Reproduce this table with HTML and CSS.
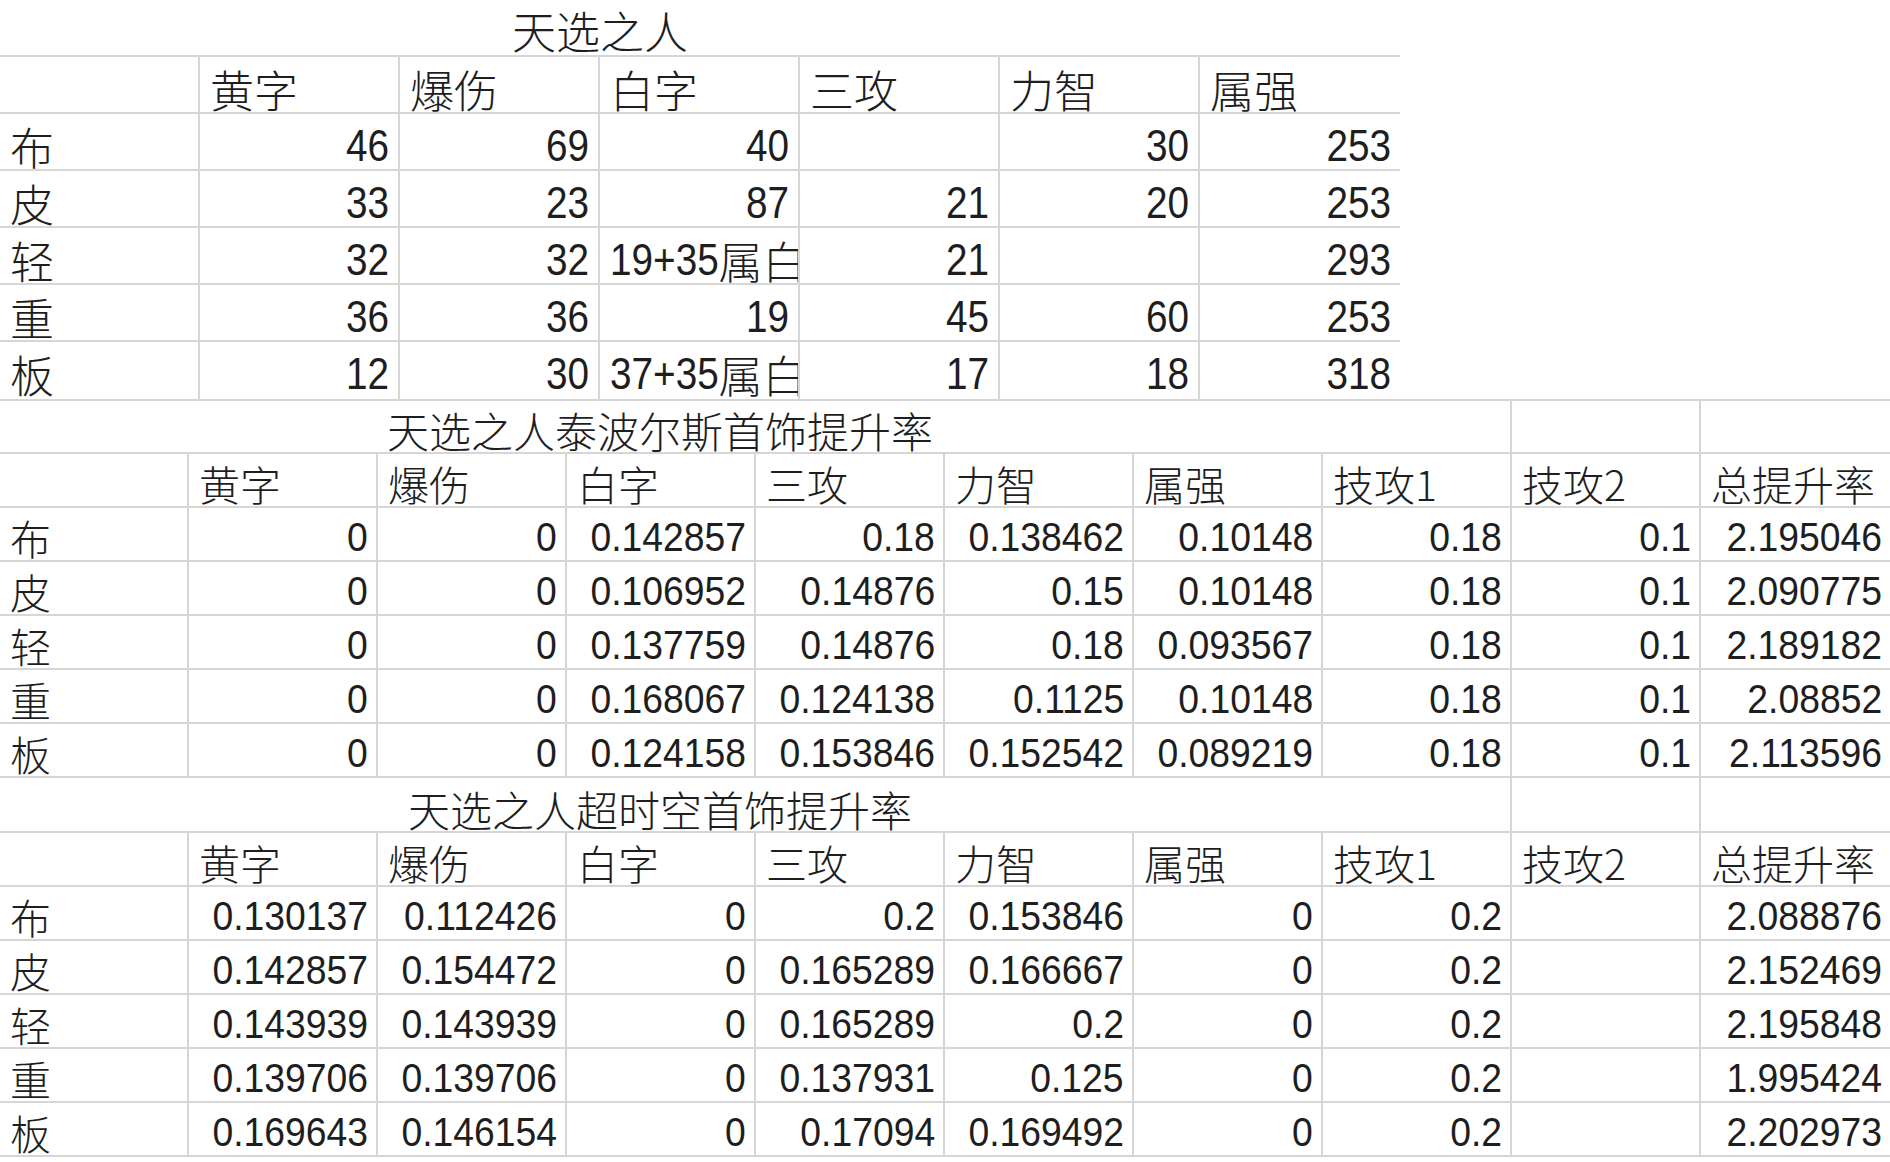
FILE: index.html
```html
<!DOCTYPE html>
<html lang="zh-CN">
<head>
<meta charset="utf-8">
<title>天选之人</title>
<link rel="stylesheet" href="styles.css">
</head>
<body>
<section class="sheet t1">
  <div class="title"><div class="title-text">天选之人</div></div>
  <div class="row head">
    <div class="cell"></div><div class="cell zh">黄字</div><div class="cell zh">爆伤</div><div class="cell zh">白字</div><div class="cell zh">三攻</div><div class="cell zh">力智</div><div class="cell zh end">属强</div>
  </div>
  <div class="row">
    <div class="cell zh">布</div><div class="cell num"><span>46</span></div><div class="cell num"><span>69</span></div><div class="cell num"><span>40</span></div><div class="cell num"></div><div class="cell num"><span>30</span></div><div class="cell num end"><span>253</span></div>
  </div>
  <div class="row">
    <div class="cell zh">皮</div><div class="cell num"><span>33</span></div><div class="cell num"><span>23</span></div><div class="cell num"><span>87</span></div><div class="cell num"><span>21</span></div><div class="cell num"><span>20</span></div><div class="cell num end"><span>253</span></div>
  </div>
  <div class="row">
    <div class="cell zh">轻</div><div class="cell num"><span>32</span></div><div class="cell num"><span>32</span></div><div class="cell txt"><span class="d">19+35</span><span class="zh">属白</span></div><div class="cell num"><span>21</span></div><div class="cell num"></div><div class="cell num end"><span>293</span></div>
  </div>
  <div class="row">
    <div class="cell zh">重</div><div class="cell num"><span>36</span></div><div class="cell num"><span>36</span></div><div class="cell num"><span>19</span></div><div class="cell num"><span>45</span></div><div class="cell num"><span>60</span></div><div class="cell num end"><span>253</span></div>
  </div>
  <div class="row last">
    <div class="cell zh">板</div><div class="cell num"><span>12</span></div><div class="cell num"><span>30</span></div><div class="cell txt"><span class="d">37+35</span><span class="zh">属白</span></div><div class="cell num"><span>17</span></div><div class="cell num"><span>18</span></div><div class="cell num end"><span>318</span></div>
  </div>
</section>

<section class="sheet wide t2">
  <div class="title">
    <div class="cell title-text">天选之人泰波尔斯首饰提升率</div><div class="cell"></div><div class="cell end"></div>
  </div>
  <div class="row head">
    <div class="cell"></div><div class="cell zh">黄字</div><div class="cell zh">爆伤</div><div class="cell zh">白字</div><div class="cell zh">三攻</div><div class="cell zh">力智</div><div class="cell zh">属强</div><div class="cell zh">技攻1</div><div class="cell zh">技攻2</div><div class="cell zh end">总提升率</div>
  </div>
  <div class="row">
    <div class="cell zh">布</div><div class="cell num"><span>0</span></div><div class="cell num"><span>0</span></div><div class="cell num"><span>0.142857</span></div><div class="cell num"><span>0.18</span></div><div class="cell num"><span>0.138462</span></div><div class="cell num"><span>0.10148</span></div><div class="cell num"><span>0.18</span></div><div class="cell num"><span>0.1</span></div><div class="cell num end"><span>2.195046</span></div>
  </div>
  <div class="row">
    <div class="cell zh">皮</div><div class="cell num"><span>0</span></div><div class="cell num"><span>0</span></div><div class="cell num"><span>0.106952</span></div><div class="cell num"><span>0.14876</span></div><div class="cell num"><span>0.15</span></div><div class="cell num"><span>0.10148</span></div><div class="cell num"><span>0.18</span></div><div class="cell num"><span>0.1</span></div><div class="cell num end"><span>2.090775</span></div>
  </div>
  <div class="row">
    <div class="cell zh">轻</div><div class="cell num"><span>0</span></div><div class="cell num"><span>0</span></div><div class="cell num"><span>0.137759</span></div><div class="cell num"><span>0.14876</span></div><div class="cell num"><span>0.18</span></div><div class="cell num"><span>0.093567</span></div><div class="cell num"><span>0.18</span></div><div class="cell num"><span>0.1</span></div><div class="cell num end"><span>2.189182</span></div>
  </div>
  <div class="row">
    <div class="cell zh">重</div><div class="cell num"><span>0</span></div><div class="cell num"><span>0</span></div><div class="cell num"><span>0.168067</span></div><div class="cell num"><span>0.124138</span></div><div class="cell num"><span>0.1125</span></div><div class="cell num"><span>0.10148</span></div><div class="cell num"><span>0.18</span></div><div class="cell num"><span>0.1</span></div><div class="cell num end"><span>2.08852</span></div>
  </div>
  <div class="row">
    <div class="cell zh">板</div><div class="cell num"><span>0</span></div><div class="cell num"><span>0</span></div><div class="cell num"><span>0.124158</span></div><div class="cell num"><span>0.153846</span></div><div class="cell num"><span>0.152542</span></div><div class="cell num"><span>0.089219</span></div><div class="cell num"><span>0.18</span></div><div class="cell num"><span>0.1</span></div><div class="cell num end"><span>2.113596</span></div>
  </div>
</section>

<section class="sheet wide t3">
  <div class="title">
    <div class="cell title-text">天选之人超时空首饰提升率</div><div class="cell"></div><div class="cell end"></div>
  </div>
  <div class="row head">
    <div class="cell"></div><div class="cell zh">黄字</div><div class="cell zh">爆伤</div><div class="cell zh">白字</div><div class="cell zh">三攻</div><div class="cell zh">力智</div><div class="cell zh">属强</div><div class="cell zh">技攻1</div><div class="cell zh">技攻2</div><div class="cell zh end">总提升率</div>
  </div>
  <div class="row">
    <div class="cell zh">布</div><div class="cell num"><span>0.130137</span></div><div class="cell num"><span>0.112426</span></div><div class="cell num"><span>0</span></div><div class="cell num"><span>0.2</span></div><div class="cell num"><span>0.153846</span></div><div class="cell num"><span>0</span></div><div class="cell num"><span>0.2</span></div><div class="cell num"></div><div class="cell num end"><span>2.088876</span></div>
  </div>
  <div class="row">
    <div class="cell zh">皮</div><div class="cell num"><span>0.142857</span></div><div class="cell num"><span>0.154472</span></div><div class="cell num"><span>0</span></div><div class="cell num"><span>0.165289</span></div><div class="cell num"><span>0.166667</span></div><div class="cell num"><span>0</span></div><div class="cell num"><span>0.2</span></div><div class="cell num"></div><div class="cell num end"><span>2.152469</span></div>
  </div>
  <div class="row">
    <div class="cell zh">轻</div><div class="cell num"><span>0.143939</span></div><div class="cell num"><span>0.143939</span></div><div class="cell num"><span>0</span></div><div class="cell num"><span>0.165289</span></div><div class="cell num"><span>0.2</span></div><div class="cell num"><span>0</span></div><div class="cell num"><span>0.2</span></div><div class="cell num"></div><div class="cell num end"><span>2.195848</span></div>
  </div>
  <div class="row">
    <div class="cell zh">重</div><div class="cell num"><span>0.139706</span></div><div class="cell num"><span>0.139706</span></div><div class="cell num"><span>0</span></div><div class="cell num"><span>0.137931</span></div><div class="cell num"><span>0.125</span></div><div class="cell num"><span>0</span></div><div class="cell num"><span>0.2</span></div><div class="cell num"></div><div class="cell num end"><span>1.995424</span></div>
  </div>
  <div class="row">
    <div class="cell zh">板</div><div class="cell num"><span>0.169643</span></div><div class="cell num"><span>0.146154</span></div><div class="cell num"><span>0</span></div><div class="cell num"><span>0.17094</span></div><div class="cell num"><span>0.169492</span></div><div class="cell num"><span>0</span></div><div class="cell num"><span>0.2</span></div><div class="cell num"></div><div class="cell num end"><span>2.202973</span></div>
  </div>
</section>
</body>
</html>
```

FILE: styles.css
```css
:root {
  --grid: #d6d6d6;
}

html, body {
  margin: 0;
  padding: 0;
  background: #ffffff;
}

body {
  width: 1890px;
  color: #1e1e1e;
  font-family: "Liberation Sans", "Noto Sans CJK SC", sans-serif;
}

.sheet {
  display: flex;
  flex-direction: column;
}

.cell {
  box-sizing: border-box;
  display: flex;
  align-items: flex-end;
  white-space: nowrap;
  line-height: 1;
  border-right: 2px solid var(--grid);
  border-bottom: 2px solid var(--grid);
}

.cell.end {
  border-right: none;
}

.num {
  justify-content: flex-end;
}

.num span {
  display: inline-block;
  transform-origin: right bottom;
}

.txt {
  overflow: hidden;
}

.txt .d {
  display: inline-block;
  transform-origin: left bottom;
}

.zh,
.title-text {
  font-family: "Noto Sans CJK SC", sans-serif;
  font-weight: 300;
}

/* ---------- table 1 ---------- */
.t1 {
  width: 1400px;
}

.t1 .title {
  box-sizing: border-box;
  height: 57px;
  display: flex;
  align-items: flex-end;
  border-bottom: 2px solid var(--grid);
}

.t1 .title-text {
  width: 1200px;
  text-align: center;
  font-size: 44px;
  line-height: 1;
  padding-bottom: 3px;
}

.t1 .row {
  display: grid;
  grid-template-columns: repeat(7, 200px);
  height: 57px;
}

.t1 .row.last .cell {
  border-bottom: none;
  padding-bottom: 3px;
}

.t1 .cell {
  font-size: 45px;
  padding: 0 9px 1px 10px;
}

.t1 .num span {
  transform: scaleX(0.86);
}

.t1 .txt .d {
  transform: scaleX(0.86);
  margin-right: -18px;
}

.t1 .cell.zh,
.t1 .cell .zh {
  font-size: 44px;
}

/* ---------- tables 2 & 3 ---------- */
.wide {
  width: 1890px;
}

.wide .title {
  box-sizing: border-box;
  display: grid;
  grid-template-columns: 1512px 189px 189px;
  height: 55px;
}

.t2 .title {
  border-top: 2px solid var(--grid);
}

.wide .row {
  display: grid;
  grid-template-columns: repeat(10, 189px);
  height: 54px;
}

.wide .cell {
  font-size: 41px;
  padding: 0 8px 2px 10px;
}

.wide .num span {
  transform: scaleX(0.91);
}

.wide .cell.zh {
  font-size: 41px;
}

.wide .title .title-text {
  justify-content: center;
  padding: 0 190px 1px 0;
  font-size: 42px;
}
```
